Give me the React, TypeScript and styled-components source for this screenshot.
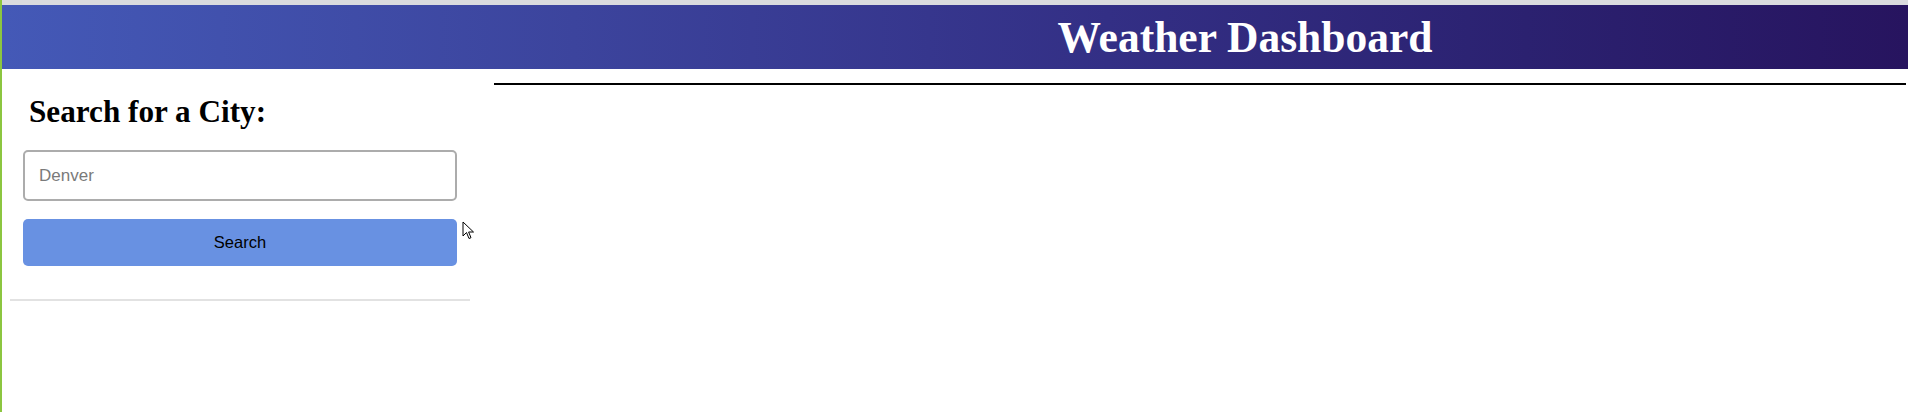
import React from "react";
import styled, { createGlobalStyle } from "styled-components";

const GlobalStyle = createGlobalStyle`
  html, body {
    margin: 0;
    padding: 0;
    background: #ffffff;
  }
  body {
    font-family: "Liberation Serif", "Times New Roman", serif;
  }
  * { box-sizing: border-box; }
`;

const Page = styled.div`
  position: relative;
  min-height: 412px;
  border-left: 2px solid #8cc640;
  display: flex;
  flex-direction: column;
`;

const TopStrip = styled.div`
  height: 6px;
  background: #dadbde;
  border-bottom: 1px solid #9a9ab0;
`;

const Header = styled.header`
  height: 64px;
  margin-top: -1px;
  background: linear-gradient(90deg, #4459b7 0%, #3c449d 30%, #332f85 58%, #2b2170 80%, #27145f 100%);
  display: flex;
  align-items: center;
  justify-content: center;
  padding-left: 580px;
`;

const Title = styled.h1`
  margin: 0;
  color: #ffffff;
  font-family: "Liberation Serif", "Times New Roman", serif;
  font-weight: bold;
  font-size: 43.5px;
  line-height: 50px;
`;

const Main = styled.main`
  display: flex;
  gap: 16px;
  padding-right: 2px;
`;

const Sidebar = styled.aside`
  width: 476px;
  flex: none;
  padding: 0 8px;
  display: flex;
  flex-direction: column;
`;

const SearchHeading = styled.h2`
  margin: 26px 0 0 19px;
  font-family: "Liberation Serif", "Times New Roman", serif;
  font-weight: bold;
  font-size: 31.2px;
  line-height: 34px;
  color: #000;
`;

const Form = styled.form`
  display: flex;
  flex-direction: column;
  gap: 18px;
  padding: 0 13px;
  margin-top: 21px;
`;

const CityInput = styled.input`
  height: 51px;
  border: 2px solid #acacac;
  border-radius: 5px;
  padding: 0 14px;
  font-family: "Liberation Sans", Arial, sans-serif;
  font-size: 17px;
  color: #222;
  outline: none;
  &::placeholder {
    color: #7a7a7a;
  }
`;

const SearchButton = styled.button`
  height: 47px;
  border: none;
  border-radius: 5px;
  background: #6891e2;
  color: #000;
  font-family: "Liberation Sans", Arial, sans-serif;
  font-size: 16.5px;
  cursor: pointer;
`;

const Divider = styled.hr`
  margin: 33px 0 0;
  border: none;
  height: 2px;
  background: #e2e2e2;
`;

const Content = styled.section`
  flex: 1;
  margin-top: 14px;
  border-top: 2px solid #000;
`;

const Cursor = styled.svg`
  position: absolute;
  left: 460px;
  top: 221px;
  width: 14px;
  height: 20px;
  pointer-events: none;
`;

export default function App() {
  return (
    <>
      <GlobalStyle />
      <Page>
        <TopStrip />
        <Header>
          <Title>Weather Dashboard</Title>
        </Header>
        <Main>
          <Sidebar>
            <SearchHeading>Search for a City:</SearchHeading>
            <Form onSubmit={(e) => e.preventDefault()}>
              <CityInput type="text" placeholder="Denver" />
              <SearchButton type="submit">Search</SearchButton>
            </Form>
            <Divider />
          </Sidebar>
          <Content />
        </Main>
        <Cursor viewBox="0 0 14 20">
          <path
            d="M1 1 L1 15 L4.5 11.5 L7 17.5 L9 16.7 L6.6 11 L11.5 11 Z"
            fill="#ffffff"
            stroke="#000000"
            strokeWidth="1"
            strokeLinejoin="round"
          />
        </Cursor>
      </Page>
    </>
  );
}
